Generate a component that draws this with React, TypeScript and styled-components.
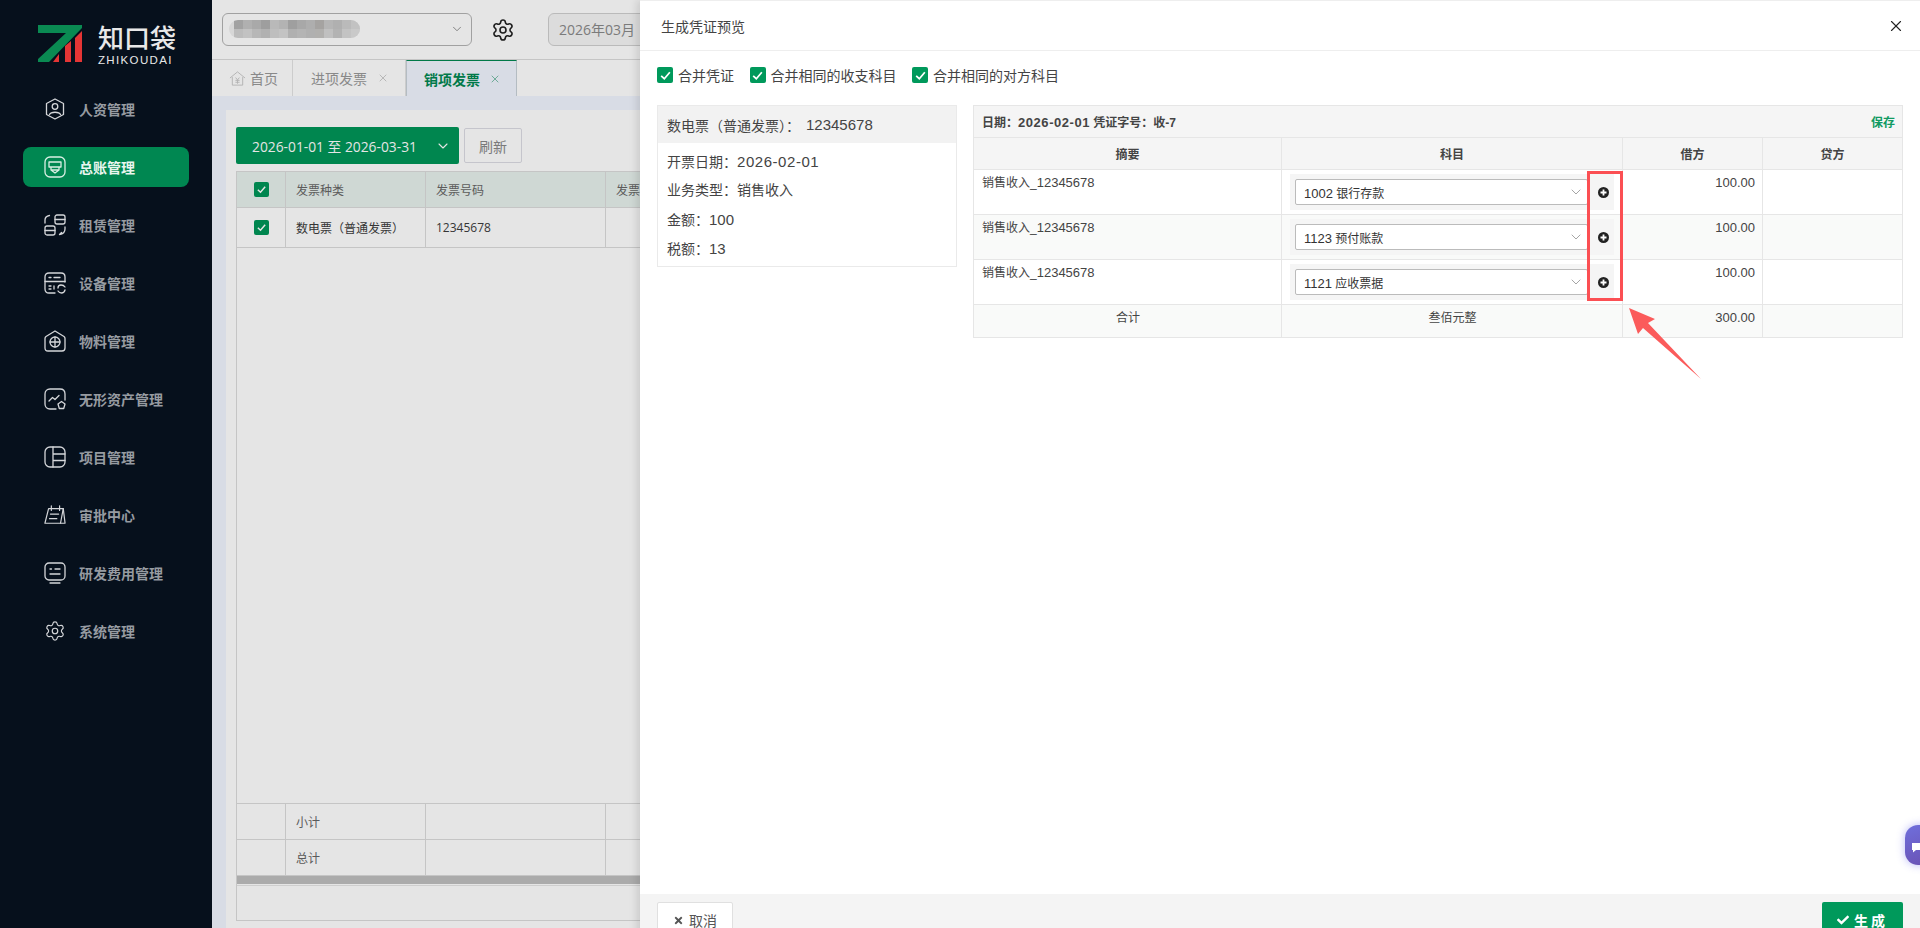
import React from 'react';
import styled, { createGlobalStyle } from 'styled-components';
import { ChevronDown, X, Settings } from 'lucide-react';
import { FaTimes, FaCheck } from 'react-icons/fa';

const GlobalStyle = createGlobalStyle`
  html, body {
    margin: 0;
    padding: 0;
    height: 100%;
    overflow: hidden;
    background: #fff;
  }
  * {
    box-sizing: border-box;
  }
`;

const Page = styled.div`
  position: relative;
  display: flex;
  width: 1920px;
  height: 928px;
  overflow: hidden;
  font-family: "Open Sans", "Noto Sans CJK SC", sans-serif;
`;

/* ---------- sidebar ---------- */

const Sidebar = styled.aside`
  width: 212px;
  flex-shrink: 0;
  background: #06101c;
  display: flex;
  flex-direction: column;
  position: relative;
  z-index: 3;
`;

const Logo = styled.div`
  display: flex;
  gap: 15px;
  height: 62px;
  padding: 25px 0 0 38px;
  box-sizing: content-box;
  margin-bottom: 2px;
`;

const LogoWords = styled.div`
  display: flex;
  flex-direction: column;
  color: #e8e8e8;
  margin-top: -3px;
`;

const LogoName = styled.div`
  font-size: 26px;
  line-height: 30px;
  font-weight: 500;
  letter-spacing: 0;
  font-family: "Noto Sans CJK SC", sans-serif;
`;

const LogoLatin = styled.div`
  font-family: "Liberation Sans", sans-serif;
  font-size: 11.5px;
  line-height: 14px;
  margin-top: 1px;
  letter-spacing: 1.35px;
`;

const Nav = styled.nav`
  display: flex;
  flex-direction: column;
  gap: 18px;
  padding: 0 23px;
`;

const NavItem = styled.div<{ $active?: boolean }>`
  display: flex;
  align-items: center;
  gap: 13px;
  height: 40px;
  width: 166px;
  padding-left: 21px;
  border-radius: 8px;
  font-size: 14px;
  font-weight: 700;
  font-family: "Noto Sans CJK SC", sans-serif;
  color: ${p => (p.$active ? '#e9f6ef' : '#969ba1')};
  background: ${p => (p.$active ? '#008751' : 'transparent')};

  svg {
    width: 22px;
    height: 22px;
    flex-shrink: 0;
    fill: none;
    stroke: ${p => (p.$active ? '#d9efe4' : '#d4d6d9')};
    stroke-width: 1.3;
    stroke-linecap: round;
    stroke-linejoin: round;
  }
`;

/* ---------- main behind the drawer ---------- */

const Main = styled.main`
  flex: 1;
  min-width: 0;
  display: flex;
  flex-direction: column;
  background: #fff;
`;

const TopBar = styled.div`
  height: 60px;
  flex-shrink: 0;
  display: flex;
  align-items: center;
  padding: 0 0 0 10px;
  border-bottom: 1px solid #dcdcdc;
`;

const CompanySelect = styled.div`
  width: 250px;
  height: 33px;
  margin-top: -1px;
  display: flex;
  align-items: center;
  justify-content: space-between;
  padding: 0 7px 0 6px;
  border: 1px solid #b4b4b4;
  border-radius: 6px;
  color: #666;
`;

const Mosaic = styled.div`
  display: grid;
  grid-template-columns: repeat(14, 9px);
  grid-auto-rows: 9px;
  padding-left: 5px;
  border-radius: 9px;
  overflow: hidden;
  background: #f0f0f0;
`;

const MosaicCell = styled.div<{ $shade: string }>`
  background: ${p => p.$shade};
`;

const GearButton = styled.div`
  width: 62px;
  margin-right: 14px;
  display: flex;
  justify-content: center;
  color: #222;
`;

const PeriodBox = styled.div`
  width: 180px;
  height: 33px;
  margin-top: -1px;
  display: flex;
  align-items: center;
  padding-left: 10px;
  font-size: 14px;
  color: #8a8a8a;
  background: #f5f5f5;
  border: 1px solid #d0d0d0;
  border-radius: 6px;
`;

const TabBar = styled.div`
  height: 36px;
  flex-shrink: 0;
  display: flex;
`;

const Tab = styled.div<{ $active?: boolean; $width: number }>`
  width: ${p => p.$width}px;
  display: flex;
  align-items: center;
  padding-left: ${p => (p.$active ? 17 : 18)}px;
  gap: ${p => (p.$active ? 9 : 10)}px;
  font-size: 14px;
  font-family: "Noto Sans CJK SC", sans-serif;
  font-weight: ${p => (p.$active ? 700 : 400)};
  color: ${p => (p.$active ? '#008751' : '#999')};
  background: ${p => (p.$active ? '#f1f5ff' : 'transparent')};
  border-right: 1px solid ${p => (p.$active ? '#c9d2d8' : '#e4e4e4')};
  border-left: ${p => (p.$active ? '1px solid #c9d2d8' : 'none')};
  border-top: ${p => (p.$active ? '1px solid #008751' : 'none')};
`;

const HomeTab = styled(Tab)`
  padding-left: 17px;
  gap: 4px;
`;

const Content = styled.div`
  flex: 1;
  min-height: 0;
  padding: 14px 0 0 14px;
  background: #f1f5ff;
`;

const Card = styled.div`
  height: 100%;
  padding: 17px 0 7px 10px;
  background: #fff;
  display: flex;
  flex-direction: column;
`;

const Toolbar = styled.div`
  display: flex;
  align-items: center;
  gap: 5px;
  height: 37px;
  margin-bottom: 7px;
  flex-shrink: 0;
`;

const DateButton = styled.div`
  width: 223px;
  height: 37px;
  display: flex;
  align-items: center;
  justify-content: space-between;
  padding: 0 8px 0 16px;
  font-size: 13.8px;
  color: #fff;
  background: #009659;
  border-radius: 2px;
`;

const PlainButton = styled.div`
  width: 58px;
  height: 35px;
  display: flex;
  align-items: center;
  justify-content: center;
  font-size: 14px;
  color: #888;
  border: 1px solid #dcdce4;
  border-radius: 2px;
`;

const Grid = styled.div`
  flex: 1;
  min-height: 0;
  display: flex;
  flex-direction: column;
  border: 1px solid #dcdcdc;
  border-right: none;
`;

const GridRow = styled.div<{ $height: number; $head?: boolean }>`
  height: ${p => p.$height}px;
  flex-shrink: 0;
  display: grid;
  grid-template-columns: 49px 140px 180px 1fr;
  background: ${p => (p.$head ? '#e7f1ed' : 'transparent')};
  border-bottom: 1px solid #dcdcdc;
`;

const GridCell = styled.div<{ $center?: boolean }>`
  display: flex;
  align-items: center;
  justify-content: ${p => (p.$center ? 'center' : 'flex-start')};
  padding: ${p => (p.$center ? 0 : '0 10px')};
  font-size: 12px;
  color: #666;
  border-right: 1px solid #dcdcdc;
`;

const GridValue = styled(GridCell)`
  color: #3c3c3c;
  font-weight: 400;
`;

const GridFill = styled.div`
  flex: 1;
  border-bottom: 1px solid #dcdcdc;
`;

const ScrollTrack = styled.div`
  height: 8px;
  flex-shrink: 0;
  background: #bfbfbf;
`;

const GridRest = styled.div`
  height: 35px;
  flex-shrink: 0;
  margin-top: 1px;
  border-top: 1px solid #e6e6e6;
`;

const Tick = styled.span<{ $size: number; $fill: string }>`
  width: ${p => p.$size}px;
  height: ${p => p.$size}px;
  flex-shrink: 0;
  display: inline-flex;
  align-items: center;
  justify-content: center;
  border-radius: 2px;
  background: ${p => p.$fill};
  color: #fff;
`;

const Dim = styled.div`
  position: absolute;
  inset: 0 0 0 212px;
  background: rgba(0, 0, 0, 0.1);
  z-index: 1;
`;

/* ---------- drawer ---------- */

const Drawer = styled.section`
  position: absolute;
  top: 0;
  left: 640px;
  width: 1280px;
  height: 954px;
  display: flex;
  flex-direction: column;
  background: #fff;
  z-index: 2;
  box-shadow: -3px 0 8px rgba(0, 0, 0, 0.12);
  font-family: "Liberation Sans", "Noto Sans CJK SC", sans-serif;
`;

const DrawerHead = styled.header`
  height: 51px;
  flex-shrink: 0;
  display: flex;
  align-items: center;
  justify-content: space-between;
  padding: 0 15px 0 21px;
  font-size: 14px;
  color: #444;
  border-top: 1px solid #eee;
  border-bottom: 1px solid #eee;
`;

const DrawerBody = styled.div`
  flex: 1;
  min-height: 0;
  padding: 16px 17px 0;
`;

const Options = styled.div`
  display: flex;
  gap: 15.5px;
  height: 16px;
  margin-bottom: 22px;
  align-items: center;
`;

const Option = styled.label`
  display: flex;
  align-items: center;
  gap: 5px;
  font-size: 14px;
  color: #444;
`;

const Columns = styled.div`
  display: flex;
  gap: 16px;
  align-items: flex-start;
`;

const InvoiceCard = styled.div`
  width: 300px;
  flex-shrink: 0;
  border: 1px solid #eaeaea;
`;

const InvoiceTitle = styled.div`
  height: 37px;
  display: flex;
  align-items: center;
  gap: 6px;
  padding-left: 9px;
  font-size: 14px;
  color: #444;
  background: #f2f2f2;
`;

const InvoiceBody = styled.div`
  padding: 4px 9px 3px;
`;

const InvoiceLine = styled.div`
  height: 29px;
  line-height: 29px;
  font-size: 14px;
  color: #444;
`;

/* latin runs sit one pixel larger than the CJK around them */
const Num = styled.span<{ $size?: number; $spread?: boolean }>`
  font-size: ${p => p.$size || 15}px;
  letter-spacing: ${p => (p.$spread ? '0.55px' : '0')};
`;

const Voucher = styled.div`
  position: relative;
  width: 930px;
  border: 1px solid #e6e6e6;
  border-bottom: none;
`;

const VoucherTitle = styled.div`
  height: 32px;
  display: flex;
  align-items: center;
  justify-content: space-between;
  padding: 0 7px 0 8px;
  font-size: 12px;
  font-weight: 700;
  color: #444;
  background: #f5f5f5;
  border-bottom: 1px solid #e6e6e6;
`;

const SaveLink = styled.span`
  color: #119a62;
  font-size: 12px;
`;

const VoucherRow = styled.div<{ $height: number; $tint?: string }>`
  height: ${p => p.$height}px;
  display: grid;
  grid-template-columns: 308px 341px 140px 1fr;
  background: ${p => p.$tint || 'transparent'};
  border-bottom: 1px solid #e6e6e6;
`;

const HeadCell = styled.div`
  display: flex;
  align-items: center;
  justify-content: center;
  font-size: 12px;
  font-weight: 700;
  color: #444;
  border-right: 1px solid #e6e6e6;

  &:last-child {
    border-right: none;
  }
`;

const TextCell = styled.div<{ $align?: string }>`
  padding: 5px 7px 0 8px;
  font-size: 12px;
  line-height: 16px;
  color: #444;
  text-align: ${p => p.$align || 'left'};
  border-right: 1px solid #e6e6e6;

  &:last-child {
    border-right: none;
  }
`;

const SubjectCell = styled.div`
  padding: 4px 8px 5px 8px;
  border-right: 1px solid #e6e6e6;
`;

const SubjectBox = styled.div`
  height: 36px;
  display: flex;
  align-items: center;
  padding-left: 5px;
  background: #f5f5f5;
`;

const SubjectSelect = styled.div`
  width: 293px;
  height: 26px;
  display: flex;
  align-items: center;
  justify-content: space-between;
  padding: 0 3px 0 8px;
  font-size: 12px;
  color: #333;
  background: #fff;
  border: 1px solid #bbb;
  border-radius: 2px;
`;

const AddButton = styled.div`
  flex: 1;
  display: flex;
  justify-content: center;
  padding-left: 5px;
  color: #222;
`;

const Marker = styled.div`
  position: absolute;
  left: 613px;
  top: 65px;
  width: 36px;
  height: 130px;
  border: 3px solid #fb4f53;
`;

const Pointer = styled.svg`
  position: absolute;
  left: 654px;
  top: 201px;
  width: 74px;
  height: 72px;
`;

const DrawerFoot = styled.footer`
  height: 60px;
  flex-shrink: 0;
  display: flex;
  align-items: flex-start;
  justify-content: space-between;
  padding: 8px 17px 0;
  background: #f4f4f4;
`;

const CancelButton = styled.div`
  width: 76px;
  height: 36px;
  display: flex;
  align-items: center;
  justify-content: center;
  gap: 5px;
  font-size: 14px;
  color: #555;
  background: #fff;
  border: 1px solid #e0e0e0;
  border-radius: 2px;
`;

const SubmitButton = styled.div`
  width: 81px;
  height: 36px;
  display: flex;
  align-items: center;
  justify-content: center;
  gap: 5px;
  font-size: 14px;
  font-weight: 700;
  letter-spacing: 3px;
  color: #fff;
  background: #00995b;
  border-radius: 2px;
`;

const ChatBubble = styled.div`
  position: absolute;
  left: 1905px;
  top: 825px;
  width: 40px;
  height: 40px;
  padding: 11px 0 0 6px;
  border-radius: 13px;
  background: linear-gradient(160deg, #6f6fdc, #6a4fb0);
  box-shadow: 0 0 8px rgba(100, 100, 240, 0.45);
  z-index: 4;
`;

/* ---------- drawings ---------- */

const ZMark = () => (
  <svg width="45" height="38" viewBox="0 0 45 38">
    <polygon points="0,0 44,0 44,3 11,37 0,37 0,34 28,8 0,8" fill="#0a8a52" />
    <polygon points="15,37 21,29 21,37" fill="#e53535" />
    <polygon points="27,37 27,21 33,16 33,37" fill="#e53535" />
    <polygon points="37,37 37,13 44,6 44,37" fill="#e53535" />
  </svg>
);

const navIcons: React.ReactNode[] = [
  <svg viewBox="0 0 22 22" key="hr">
    <path d="M11 1 19.5 5.5V16.5L11 21 2.5 16.5V5.5Z" />
    <circle cx="11" cy="8.5" r="2.8" />
    <path d="M5.5 16.5C7 13.5 15 13.5 16.5 16.5" />
  </svg>,
  <svg viewBox="0 0 22 22" key="ledger">
    <rect x="1" y="1" width="20" height="20" rx="5" />
    <path d="M5 6H17V11H5ZM7 11V14L11 17 15 14V11M8 14H14" />
  </svg>,
  <svg viewBox="0 0 22 22" key="lease">
    <path d="M1 9V6C1 3.5 3 2 5.5 1.500" />
    <rect x="11" y="1" width="10" height="9" rx="2" />
    <path d="M11 5.500H21" />
    <rect x="1" y="12" width="10" height="9" rx="2" />
    <path d="M1 16.500H11" />
    <path d="M21 13V15C21 18 19 20 15.500 20.500M15.500 20.500 17.500 18.500" />
  </svg>,
  <svg viewBox="0 0 22 22" key="device">
    <path d="M11 21H5C2.500 21 1 19.500 1 17V5C1 2.500 2.500 1 5 1H17C19.500 1 21 2.500 21 5V10" />
    <path d="M1 9.500H21M5 5.500H7M10 5.500H16M5 14H7M5 17H7M10 14V17" />
    <path d="M14 16C14 14 15.500 13 17 13S20 13.500 21 15M21 18C20.500 20 19 21 17.500 21S15 20.500 14 19" />
  </svg>,
  <svg viewBox="0 0 22 22" key="material">
    <path d="M11 1 20 6.500C20.700 7 21 7.700 21 8.500V18C21 20 20 21 18 21H4C2 21 1 20 1 18V8.500C1 7.700 1.300 7 2 6.500Z" />
    <circle cx="11" cy="12" r="5" />
    <path d="M6 12H16M11 7V17" />
  </svg>,
  <svg viewBox="0 0 22 22" key="intangible">
    <path d="M12 21H6C3 21 1 19 1 16V6C1 3 3 1 6 1H16C19 1 21 3 21 6V12" />
    <path d="M5 13 8.500 9.500 11 11.500 15 7.500" />
    <path d="M17.500 13.500 21 16 19.700 20.500H15.300L14 16Z" />
  </svg>,
  <svg viewBox="0 0 22 22" key="project">
    <rect x="1" y="1" width="20" height="20" rx="5" />
    <path d="M9 1V21M9 8H21M9 14.500H21" />
  </svg>,
  <svg viewBox="0 0 24 22" key="approval">
    <path d="M5 4H21L23 20H1Z" />
    <path d="M8 1V6M17 1V6M21 4 18 20M7 10H16M6 15H14" />
  </svg>,
  <svg viewBox="0 0 22 22" key="research">
    <rect x="1" y="1" width="20" height="17" rx="4" />
    <path d="M6 21H16M6 7H7.500M11 7H16M6 12H16" />
  </svg>,
];

const Check = ({ size }: { size: number }) => (
  <svg width={size} height={size} viewBox="0 0 12 12" fill="none" stroke="#fff" strokeWidth="1.6">
    <path d="M2 6.300 4.900 9 10 3" />
  </svg>
);

const PlusCircle = () => (
  <svg width="11" height="11" viewBox="0 0 11 11">
    <circle cx="5.500" cy="5.500" r="5.500" fill="#222" />
    <path d="M5.500 2.500V8.500M2.500 5.500H8.500" stroke="#fff" strokeWidth="1.800" />
  </svg>
);

const HomeIcon = () => (
  <svg width="17" height="17" viewBox="0 0 18 18" fill="none" stroke="#c8c8c8" strokeWidth="1">
    <path d="M1 8.500 9 2 17 8.500M3.500 7.500V16H14.500V7.500" />
    <path d="M7 8 9 10.500 11 8M6.800 11H11.200M6.800 13H11.200M9 10.500V14.500" />
  </svg>
);

const navItems = ['人资管理', '总账管理', '租赁管理', '设备管理', '物料管理', '无形资产管理', '项目管理', '审批中心', '研发费用管理', '系统管理'];

const mosaicShades = [
  '#b5b5b5', '#c4c4c4', '#bdbdbd', '#b0b0b0', '#cfcfcf', '#c8c8c8', '#b2b2b2', '#bbbbbb', '#c2c2c2', '#b8b6b4', '#cacaca', '#c4c4c4', '#d0d0d0', '#d8d8d8',
  '#d2d2d2', '#d8d8d8', '#cccccc', '#c6c6c6', '#d4d4d4', '#dadada', '#c4c4c4', '#c9c9c9', '#c4c4c4', '#c6c4c2', '#d6d6d6', '#c8c8c8', '#dadada', '#e0e0e0',
];

const voucherLines = [
  { code: '1002', name: '银行存款' },
  { code: '1123', name: '预付账款', tint: '#f9faf9' },
  { code: '1121', name: '应收票据' },
];

const optionLabels = ['合并凭证', '合并相同的收支科目', '合并相同的对方科目'];

const App: React.FC = () => {
  return (
    <Page>
      <GlobalStyle />
      <Sidebar>
        <Logo>
          <ZMark />
          <LogoWords>
            <LogoName>知口袋</LogoName>
            <LogoLatin>ZHIKOUDAI</LogoLatin>
          </LogoWords>
        </Logo>
        <Nav>
          {navItems.map((label, index) => (
            <NavItem key={label} $active={index === 1}>
              {navIcons[index] || <Settings strokeWidth={1.4} />}
              {label}
            </NavItem>
          ))}
        </Nav>
      </Sidebar>

      <Main>
        <TopBar>
          <CompanySelect>
            <Mosaic>
              {mosaicShades.map((shade, index) => (
                <MosaicCell key={index} $shade={shade} />
              ))}
            </Mosaic>
            <ChevronDown size={14} strokeWidth={1.2} />
          </CompanySelect>
          <GearButton>
            <Settings size={24} strokeWidth={1.6} />
          </GearButton>
          <PeriodBox>2026年03月</PeriodBox>
        </TopBar>
        <TabBar>
          <HomeTab $width={81}>
            <HomeIcon />
            首页
          </HomeTab>
          <Tab $width={113}>
            进项发票
            <X size={12} strokeWidth={1.2} color="#aaa" />
          </Tab>
          <Tab $active $width={111}>
            销项发票
            <X size={12} strokeWidth={1.2} color="#2b9a70" />
          </Tab>
        </TabBar>
        <Content>
          <Card>
            <Toolbar>
              <DateButton>
                2026-01-01 至 2026-03-31
                <ChevronDown size={16} strokeWidth={1.6} />
              </DateButton>
              <PlainButton>刷新</PlainButton>
            </Toolbar>
            <Grid>
              <GridRow $height={36} $head>
                <GridCell $center>
                  <Tick $size={15} $fill="#009659">
                    <Check size={11} />
                  </Tick>
                </GridCell>
                <GridCell>发票种类</GridCell>
                <GridCell>发票号码</GridCell>
                <GridCell>发票</GridCell>
              </GridRow>
              <GridRow $height={40}>
                <GridCell $center>
                  <Tick $size={15} $fill="#009659">
                    <Check size={11} />
                  </Tick>
                </GridCell>
                <GridValue>数电票（普通发票）</GridValue>
                <GridValue>12345678</GridValue>
                <GridCell />
              </GridRow>
              <GridFill />
              <GridRow $height={36}>
                <GridCell />
                <GridCell>小计</GridCell>
                <GridCell />
                <GridCell />
              </GridRow>
              <GridRow $height={36}>
                <GridCell />
                <GridCell>总计</GridCell>
                <GridCell />
                <GridCell />
              </GridRow>
              <ScrollTrack />
              <GridRest />
            </Grid>
          </Card>
        </Content>
      </Main>

      <Dim />

      <Drawer>
        <DrawerHead>
          生成凭证预览
          <X size={18} strokeWidth={1.5} color="#222" />
        </DrawerHead>
        <DrawerBody>
          <Options>
            {optionLabels.map(label => (
              <Option key={label}>
                <Tick $size={16} $fill="#00995b">
                  <Check size={13} />
                </Tick>
                {label}
              </Option>
            ))}
          </Options>
          <Columns>
            <InvoiceCard>
              <InvoiceTitle>
                <span>数电票（普通发票）：</span>
                <Num>12345678</Num>
              </InvoiceTitle>
              <InvoiceBody>
                <InvoiceLine>
                  开票日期：<Num $spread>2026-02-01</Num>
                </InvoiceLine>
                <InvoiceLine>业务类型：销售收入</InvoiceLine>
                <InvoiceLine>
                  金额：<Num>100</Num>
                </InvoiceLine>
                <InvoiceLine>
                  税额：<Num>13</Num>
                </InvoiceLine>
              </InvoiceBody>
            </InvoiceCard>
            <Voucher>
              <VoucherTitle>
                <span>
                  日期：<Num $size={13} $spread>2026-02-01</Num> 凭证字号：收-7
                </span>
                <SaveLink>保存</SaveLink>
              </VoucherTitle>
              <VoucherRow $height={32} $tint="#f5f5f5">
                <HeadCell>摘要</HeadCell>
                <HeadCell>科目</HeadCell>
                <HeadCell>借方</HeadCell>
                <HeadCell>贷方</HeadCell>
              </VoucherRow>
              {voucherLines.map(line => (
                <VoucherRow key={line.code} $height={45} $tint={line.tint}>
                  <TextCell>
                    销售收入_<Num $size={13}>12345678</Num>
                  </TextCell>
                  <SubjectCell>
                    <SubjectBox>
                      <SubjectSelect>
                        <span>
                          <Num $size={13}>{line.code}</Num> {line.name}
                        </span>
                        <ChevronDown size={16} strokeWidth={1} color="#777" />
                      </SubjectSelect>
                      <AddButton>
                        <PlusCircle />
                      </AddButton>
                    </SubjectBox>
                  </SubjectCell>
                  <TextCell $align="right">
                    <Num $size={13}>100.00</Num>
                  </TextCell>
                  <TextCell />
                </VoucherRow>
              ))}
              <VoucherRow $height={33} $tint="#f9faf9">
                <TextCell $align="center">合计</TextCell>
                <TextCell $align="center">叁佰元整</TextCell>
                <TextCell $align="right">
                  <Num $size={13}>300.00</Num>
                </TextCell>
                <TextCell />
              </VoucherRow>
              <Marker />
              <Pointer viewBox="0 0 74 72">
                <polygon points="1,1 27,12 20,16 73,72 15,21 10,27" fill="#fb5b5b" />
              </Pointer>
            </Voucher>
          </Columns>
        </DrawerBody>
        <DrawerFoot>
          <CancelButton>
            <FaTimes size={11} />
            取消
          </CancelButton>
          <SubmitButton>
            <FaCheck size={12} />
            生成
          </SubmitButton>
        </DrawerFoot>
      </Drawer>

      <ChatBubble>
        <svg width="11" height="11" viewBox="0 0 11 11">
          <path d="M1 1H11V8H5L2 10.500V8H1Z" fill="#fff" />
        </svg>
      </ChatBubble>
    </Page>
  );
};

export default App;
